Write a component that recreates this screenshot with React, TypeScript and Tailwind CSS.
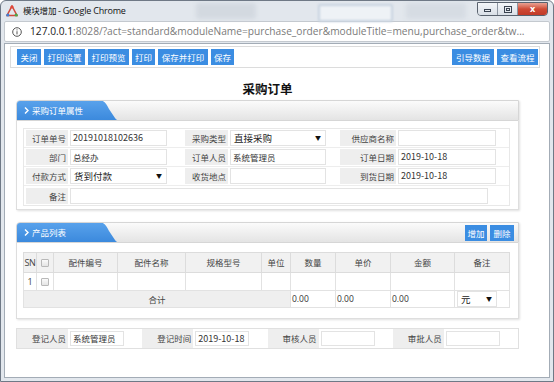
import React from "react";

const CJK = "font-['Noto_Sans_CJK_SC',sans-serif]";

function Btn({ children, w }: { children: React.ReactNode; w: string }) {
  return (
    <div className={`${w} h-[16px] bg-[#3b8de2] text-white text-[8.5px] leading-[16px] text-center`}>{children}</div>
  );
}

function Tab({ title }: { title: string }) {
  return (
    <div className="relative w-[106px] h-[21px]">
      <svg width="106" height="21" viewBox="0 0 106 21" className="absolute left-0 top-0">
        <defs>
          <linearGradient id={`tg${title}`} x1="0" y1="0" x2="0" y2="1">
            <stop offset="0" stopColor="#5aa3ec" />
            <stop offset="1" stopColor="#3a88dc" />
          </linearGradient>
        </defs>
        <path d="M0,4 Q0,0 4,0 L82,0 C88,0 90,3 93,9 L99,18 Q101,21 106,21 L0,21 Z" fill={`url(#tg${title})`} />
      </svg>
      <div className="absolute left-[8px] top-0 h-[21px] flex items-center text-white text-[8.5px] gap-[3px]">
        <svg width="5" height="7" viewBox="0 0 5 7"><path d="M1,0.5 L4,3.5 L1,6.5" stroke="#fff" strokeWidth="1.4" fill="none" /></svg>
        <span>{title}</span>
      </div>
    </div>
  );
}

function SectionHeader({ title, right }: { title: string; right?: React.ReactNode }) {
  return (
    <div className="h-[21px] flex items-center justify-between border border-[#d6d6d6] bg-gradient-to-b from-[#fbfbfb] to-[#e4e4e4] rounded-tl-[4px] overflow-hidden">
      <div className="-ml-px -mt-px"><Tab title={title} /></div>
      {right}
    </div>
  );
}

function Label({ w, children }: { w: string; children: React.ReactNode }) {
  return (
    <div className={`${w} h-[16px] bg-[#eeeeee] text-[#444] text-[8.5px] leading-[16px] text-right pr-[2px]`}>{children}</div>
  );
}

function Input({ w, children, ml = "ml-[2px]" }: { w: string; children?: React.ReactNode; ml?: string }) {
  return (
    <div className={`${w} ${ml} h-[16px] border border-[#e3e3e3] bg-white text-[9px] text-[#333] leading-[14px] pl-[2px] overflow-hidden whitespace-nowrap`}>{children}</div>
  );
}

function Select({ w, children, ml = "ml-[2px]" }: { w: string; children?: React.ReactNode; ml?: string }) {
  return (
    <div className={`${w} ${ml} h-[16px] border border-[#e3e3e3] bg-white text-[9.5px] text-[#222] leading-[14px] pl-[3px] pr-[4px] flex items-center justify-between`}>
      <span>{children}</span>
      <span className="text-[6px] text-[#111]">▼</span>
    </div>
  );
}

function Checkbox() {
  return <div className="w-[8px] h-[8px] border border-[#b8b8b8] rounded-[1px] bg-gradient-to-b from-[#fafafa] to-[#e4e4e4] mx-auto" />;
}

export default function App() {
  return (
    <div className={`w-[554px] h-[382px] overflow-hidden relative bg-[#e2e7ed] border border-[#6f7986] rounded-t-[6px] ${CJK}`}>
      {/* blurred background hints */}
      <div className="absolute left-[195px] top-[2px] w-[60px] h-[16px] bg-[#d3d9e0] rounded-[2px] blur-[2px]" />
      <div className="absolute left-[317px] top-[3px] w-[75px] h-[18px] border-2 border-[#c8d3e0] bg-[#eef2f6] rounded-[2px] blur-[1px]" />
      <div className="absolute left-[405px] top-[2px] w-[60px] h-[16px] bg-[#d6dce3] rounded-[2px] blur-[2px]" />

      {/* title bar */}
      <div className="relative h-[20px] flex items-center pl-[5px] gap-[5px]">
        <svg width="12" height="12" viewBox="0 0 12 12">
          <path d="M6,1 L11,10.5 L1,10.5 Z" fill="none" stroke="#d24a3c" strokeWidth="1.6" />
          <circle cx="6" cy="2" r="1.6" fill="#e0473a" />
          <circle cx="1.8" cy="10" r="1.6" fill="#3f7fd4" />
          <circle cx="10.2" cy="10" r="1.6" fill="#4aa84a" />
        </svg>
        <span className="text-[8.5px] text-[#111] tracking-[-0.2px]">模块增加 <span className="font-['Open_Sans',sans-serif] text-[9px]">- Google Chrome</span></span>
        <div className="absolute right-[5px] top-[1px] flex h-[14px] border border-[#59626e] rounded-b-[4px] overflow-hidden">
          <div className="w-[20px] h-full bg-gradient-to-b from-[#f4f6f9] to-[#d9dfe7] border-r border-[#8d96a2] flex items-center justify-center">
            <div className="w-[7px] h-[3px] border border-[#3a4350] mt-[3px]" />
          </div>
          <div className="w-[20px] h-full bg-gradient-to-b from-[#f4f6f9] to-[#d9dfe7] border-r border-[#8d96a2] flex items-center justify-center">
            <div className="w-[8px] h-[7px] border border-[#3a4350] flex items-center justify-center"><div className="w-[4px] h-[3px] border border-[#3a4350]" /></div>
          </div>
          <div className="w-[29px] h-full bg-gradient-to-b from-[#e8a193] via-[#cf4a35] to-[#c13a28] flex items-center justify-center text-white text-[9px] font-bold font-['Open_Sans',sans-serif]">x</div>
        </div>
      </div>

      {/* address bar */}
      <div className="mx-[3px] h-[21px] bg-white border border-[#c4c9cf] rounded-[2px] flex items-center pl-[7px] gap-[8px] font-['Open_Sans',sans-serif] text-[10.2px] whitespace-nowrap overflow-hidden">
        <svg width="10" height="10" viewBox="0 0 10 10">
          <circle cx="5" cy="5" r="4.3" fill="none" stroke="#555" strokeWidth="1" />
          <rect x="4.5" y="4.2" width="1" height="3.2" fill="#555" />
          <rect x="4.5" y="2.4" width="1" height="1" fill="#555" />
        </svg>
        <span><span className="text-[#1a1a1a]">127.0.0.1</span><span className="text-[#7a7a7a]">:8028/?act=standard&amp;moduleName=purchase_order&amp;moduleTitle=menu,purchase_order&amp;tw...</span></span>
      </div>

      {/* page */}
      <div className="mx-[3px] mt-[1px] h-[335px] bg-white border border-[#a3acb6]">
        {/* toolbar */}
        <div className="ml-[5px] mt-[2px] w-[530px] h-[22px] border border-[#dcdcdc] bg-white flex items-center justify-between pl-[6px] pr-[1px]">
          <div className="flex gap-[3px]">
            <Btn w="w-[24px]">关闭</Btn>
            <Btn w="w-[41px]">打印设置</Btn>
            <Btn w="w-[41px]">打印预览</Btn>
            <Btn w="w-[23px]">打印</Btn>
            <Btn w="w-[50px]">保存并打印</Btn>
            <Btn w="w-[23px]">保存</Btn>
          </div>
          <div className="flex gap-[3px]">
            <Btn w="w-[42px]">引导数据</Btn>
            <Btn w="w-[41px]">查看流程</Btn>
          </div>
        </div>

        <div className="ml-[11px] w-[503px]">
          <div className="mt-[13px] h-[16px] leading-[16px] text-center text-[12.5px] font-bold text-[#111]">采购订单</div>

          {/* section 1 */}
          <div className="mt-[3px] shadow-[1px_1px_2px_rgba(0,0,0,0.12)]">
            <SectionHeader title="采购订单属性" />
            <div className="border-x border-b border-[#dedede] pt-[7px] pb-[3px] pl-[6px]">
              <div className="w-[487px] border border-[#e8e8e8]">
                <div className="h-[19px] flex items-center border-b border-[#ededed] pl-[2px]">
                  <Label w="w-[42px]">订单单号</Label>
                  <div className="w-[117px] flex"><Input w="w-[97px]">20191018102636</Input></div>
                  <Label w="w-[43px]">采购类型</Label>
                  <div className="w-[112px] flex"><Select w="w-[96px]">直接采购</Select></div>
                  <Label w="w-[56px]">供应商名称</Label>
                  <div className="w-[112px] flex"><Input w="w-[98px]" /></div>
                </div>
                <div className="h-[19px] flex items-center border-b border-[#ededed] pl-[2px]">
                  <Label w="w-[42px]">部门</Label>
                  <div className="w-[117px] flex"><Input w="w-[97px]"><span className="text-[8.5px]">总经办</span></Input></div>
                  <Label w="w-[43px]">订单人员</Label>
                  <div className="w-[112px] flex"><Input w="w-[96px]"><span className="text-[8.5px]">系统管理员</span></Input></div>
                  <Label w="w-[56px]">订单日期</Label>
                  <div className="w-[112px] flex"><Input w="w-[98px]">2019-10-18</Input></div>
                </div>
                <div className="h-[19px] flex items-center border-b border-[#ededed] pl-[2px]">
                  <Label w="w-[42px]">付款方式</Label>
                  <div className="w-[117px] flex"><Select w="w-[97px]">货到付款</Select></div>
                  <Label w="w-[43px]">收货地点</Label>
                  <div className="w-[112px] flex"><Input w="w-[96px]" /></div>
                  <Label w="w-[56px]">到货日期</Label>
                  <div className="w-[112px] flex"><Input w="w-[98px]">2019-10-18</Input></div>
                </div>
                <div className="h-[19px] flex items-center pl-[2px]">
                  <Label w="w-[42px]">备注</Label>
                  <Input w="w-[418px]" />
                </div>
              </div>
            </div>
          </div>

          {/* section 2 */}
          <div className="mt-[12px] shadow-[1px_1px_2px_rgba(0,0,0,0.12)]">
            <SectionHeader
              title="产品列表"
              right={
                <div className="flex gap-[3px] pr-[4px]">
                  <Btn w="w-[22px]">增加</Btn>
                  <Btn w="w-[24px]">删除</Btn>
                </div>
              }
            />
            <div className="border-x border-b border-[#dedede] pt-[9px] pb-[10px] pl-[6px]">
              <table className="w-[486px] table-fixed border-collapse text-[8.5px] text-[#444]">
                <colgroup>
                  <col className="w-[13px]" />
                  <col className="w-[17px]" />
                  <col className="w-[64px]" />
                  <col className="w-[68px]" />
                  <col className="w-[76px]" />
                  <col className="w-[29px]" />
                  <col className="w-[45px]" />
                  <col className="w-[55px]" />
                  <col className="w-[64px]" />
                  <col className="w-[55px]" />
                </colgroup>
                <thead>
                  <tr className="h-[20px] bg-[#f1f1f1]">
                    <th className="border border-[#dcdcdc] font-normal font-['Open_Sans',sans-serif] text-[9px] p-0 tracking-[-0.3px]">SN</th>
                    <th className="border border-[#dcdcdc] p-0"><Checkbox /></th>
                    <th className="border border-[#dcdcdc] font-normal">配件编号</th>
                    <th className="border border-[#dcdcdc] font-normal">配件名称</th>
                    <th className="border border-[#dcdcdc] font-normal">规格型号</th>
                    <th className="border border-[#dcdcdc] font-normal">单位</th>
                    <th className="border border-[#dcdcdc] font-normal">数量</th>
                    <th className="border border-[#dcdcdc] font-normal">单价</th>
                    <th className="border border-[#dcdcdc] font-normal">金额</th>
                    <th className="border border-[#dcdcdc] font-normal">备注</th>
                  </tr>
                </thead>
                <tbody>
                  <tr className="h-[18px]">
                    <td className="border border-[#e2e2e2] text-center font-['Open_Sans',sans-serif] text-[9px]">1</td>
                    <td className="border border-[#e2e2e2] p-0"><Checkbox /></td>
                    <td className="border border-[#e2e2e2]" />
                    <td className="border border-[#e2e2e2]" />
                    <td className="border border-[#e2e2e2]" />
                    <td className="border border-[#e2e2e2]" />
                    <td className="border border-[#e2e2e2]" />
                    <td className="border border-[#e2e2e2]" />
                    <td className="border border-[#e2e2e2]" />
                    <td className="border border-[#e2e2e2]" />
                  </tr>
                  <tr className="h-[16px]">
                    <td colSpan={6} className="border border-[#e2e2e2] bg-[#efefef] text-center">合计</td>
                    <td className="border border-[#e2e2e2] pl-[1px] font-['Open_Sans',sans-serif] text-[8.5px] text-[#333]">0.00</td>
                    <td className="border border-[#e2e2e2] pl-[1px] font-['Open_Sans',sans-serif] text-[8.5px] text-[#333]">0.00</td>
                    <td className="border border-[#e2e2e2] pl-[1px] font-['Open_Sans',sans-serif] text-[8.5px] text-[#333]">0.00</td>
                    <td className="border border-[#e2e2e2] p-0">
                      <Select w="w-[40px]">元</Select>
                    </td>
                  </tr>
                </tbody>
              </table>
            </div>
          </div>

          {/* bottom row */}
          <div className="mt-[9px] h-[21px] border border-[#e0e0e0] grid grid-cols-4">
            {[
              ["登记人员", "系统管理员"],
              ["登记时间", "2019-10-18"],
              ["审核人员", ""],
              ["审批人员", ""],
            ].map(([l, v]) => (
              <div key={l} className="flex items-center h-[19px]">
                <div className="w-[51px] h-[19px] bg-[#eeeeee] text-[8.5px] text-[#444] leading-[19px] text-right pr-[2px]">{l}</div>
                <div className="w-[54px] ml-[2px] h-[15px] border border-[#e3e3e3] text-[9px] text-[#333] leading-[13px] pl-[2px] whitespace-nowrap overflow-hidden">
                  {v === "系统管理员" ? <span className="text-[8.5px]">{v}</span> : v}
                </div>
              </div>
            ))}
          </div>
        </div>
      </div>
    </div>
  );
}
